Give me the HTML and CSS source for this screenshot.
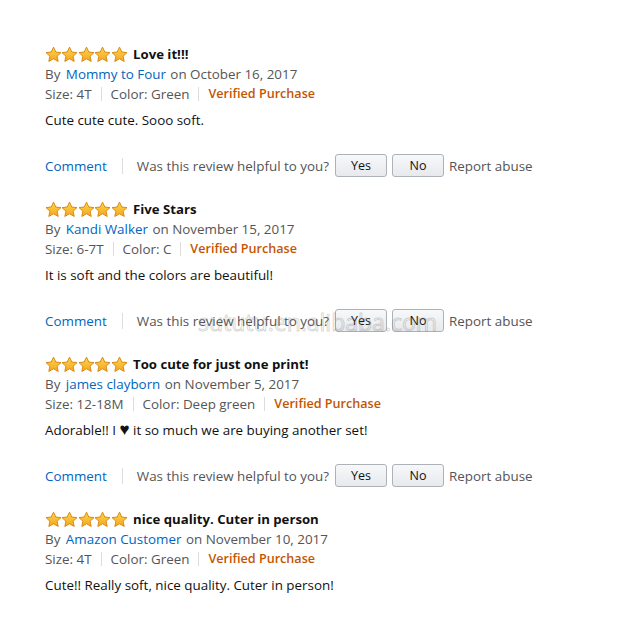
FILE: index.html
```html
<!DOCTYPE html>
<html>
<head>
<meta charset="utf-8">
<link rel="stylesheet" href="styles.css">
</head>
<body>
<svg width="0" height="0" class="defs">
  <defs>
    <linearGradient id="sg" x1="0" y1="0" x2="0" y2="1">
      <stop offset="0" stop-color="#ffd54a"/>
      <stop offset="1" stop-color="#f5a623"/>
    </linearGradient>
    <symbol id="star" viewBox="0 0 24 24">
      <path d="M12 1.6l3.2 6.9 7.4.8-5.5 5.1 1.5 7.4L12 18l-6.6 3.8 1.5-7.4-5.5-5.1 7.4-.8z" fill="url(#sg)" stroke="#d88a12" stroke-width="1.4" stroke-linejoin="round"/>
    </symbol>
  </defs>
</svg>
<main class="reviews">
  <section class="review">
    <div class="head"><span class="stars"><svg><use href="#star"/></svg><svg><use href="#star"/></svg><svg><use href="#star"/></svg><svg><use href="#star"/></svg><svg><use href="#star"/></svg></span><b class="title">Love it!!!</b></div>
    <div class="by">By <a class="author">Mommy to Four</a> on October 16, 2017</div>
    <div class="meta"><span>Size: 4T</span><i class="sep"></i><span>Color: Green</span><i class="sep"></i><span class="verified">Verified Purchase</span></div>
    <p class="body">Cute cute cute. Sooo soft.</p>
    <div class="actions"><a class="comment">Comment</a><i class="sep tall"></i><span class="q">Was this review helpful to you?</span><button class="btn">Yes</button><button class="btn">No</button><span class="report">Report abuse</span></div>
  </section>
  <section class="review">
    <div class="head"><span class="stars"><svg><use href="#star"/></svg><svg><use href="#star"/></svg><svg><use href="#star"/></svg><svg><use href="#star"/></svg><svg><use href="#star"/></svg></span><b class="title">Five Stars</b></div>
    <div class="by">By <a class="author">Kandi Walker</a> on November 15, 2017</div>
    <div class="meta"><span>Size: 6-7T</span><i class="sep"></i><span>Color: C</span><i class="sep"></i><span class="verified">Verified Purchase</span></div>
    <p class="body">It is soft and the colors are beautiful!</p>
    <div class="actions"><a class="comment">Comment</a><i class="sep tall"></i><span class="q">Was this review helpful to you?</span><button class="btn">Yes</button><button class="btn">No</button><span class="report">Report abuse</span></div>
    <span class="watermark">sututu.en.alibaba.com</span>
  </section>
  <section class="review">
    <div class="head"><span class="stars"><svg><use href="#star"/></svg><svg><use href="#star"/></svg><svg><use href="#star"/></svg><svg><use href="#star"/></svg><svg><use href="#star"/></svg></span><b class="title">Too cute for just one print!</b></div>
    <div class="by">By <a class="author">james clayborn</a> on November 5, 2017</div>
    <div class="meta"><span>Size: 12-18M</span><i class="sep"></i><span>Color: Deep green</span><i class="sep"></i><span class="verified">Verified Purchase</span></div>
    <p class="body">Adorable!! I <span class="heart">♥</span> it so much we are buying another set!</p>
    <div class="actions"><a class="comment">Comment</a><i class="sep tall"></i><span class="q">Was this review helpful to you?</span><button class="btn">Yes</button><button class="btn">No</button><span class="report">Report abuse</span></div>
  </section>
  <section class="review">
    <div class="head"><span class="stars"><svg><use href="#star"/></svg><svg><use href="#star"/></svg><svg><use href="#star"/></svg><svg><use href="#star"/></svg><svg><use href="#star"/></svg></span><b class="title">nice quality. Cuter in person</b></div>
    <div class="by">By <a class="author">Amazon Customer</a> on November 10, 2017</div>
    <div class="meta"><span>Size: 4T</span><i class="sep"></i><span>Color: Green</span><i class="sep"></i><span class="verified">Verified Purchase</span></div>
    <p class="body">Cute!! Really soft, nice quality. Cuter in person!</p>
  </section>
</main>
</body>
</html>
```
FILE: styles.css
```css
html, body { margin: 0; padding: 0; background: #fff; }
body { font-family: "Open Sans", "Noto Sans", sans-serif; font-size: 13.4px; color: #111; }
.defs { position: absolute; }
.reviews { padding: 44px 0 0 45px; display: flex; flex-direction: column; }
.review { position: relative; display: flex; flex-direction: column; padding-bottom: 22px; }
.head { display: flex; align-items: center; height: 20px; }
.stars { display: flex; margin-right: 6px; }
.stars svg { width: 17px; height: 17px; display: block; margin-right: -0.6px; }
.title { font-weight: 700; font-size: 13.2px; color: #111; }
.by, .meta { height: 20px; line-height: 20px; color: #555; }
.author, .comment { color: #0066c0; }
.author { margin: 0 1px 0 2px; }
.meta { display: flex; align-items: center; }
.sep { display: inline-block; width: 1px; height: 14px; background: #ddd; margin: 0 9px 0 9px; }
.verified { color: #c45500; font-weight: 600; font-size: 12.6px; }
.body { margin: 6px 0 0; height: 20px; line-height: 20px; color: #111; }
.heart { font-size: 17px; line-height: 1; }
.actions { margin-top: 24px; height: 23px; display: flex; align-items: center; color: #555; }
.actions .sep.tall { height: 16px; margin: 0 14px 0 15px; }
.q { margin-right: 6px; }
.btn { width: 52px; height: 23px; margin: 0 5px 0 0; padding: 0; border: 1px solid #adb1b8; border-radius: 3px; background: linear-gradient(#f7f8fa, #e7e9ec); font-family: inherit; font-size: 12.5px; color: #111; }
.btn + .btn { margin-right: 5px; }
.report { color: #555; }
.watermark { position: absolute; left: 153px; top: 107px; font-size: 23px; color: transparent; -webkit-text-stroke: 1px rgba(120,120,120,0.3); pointer-events: none; }
```
